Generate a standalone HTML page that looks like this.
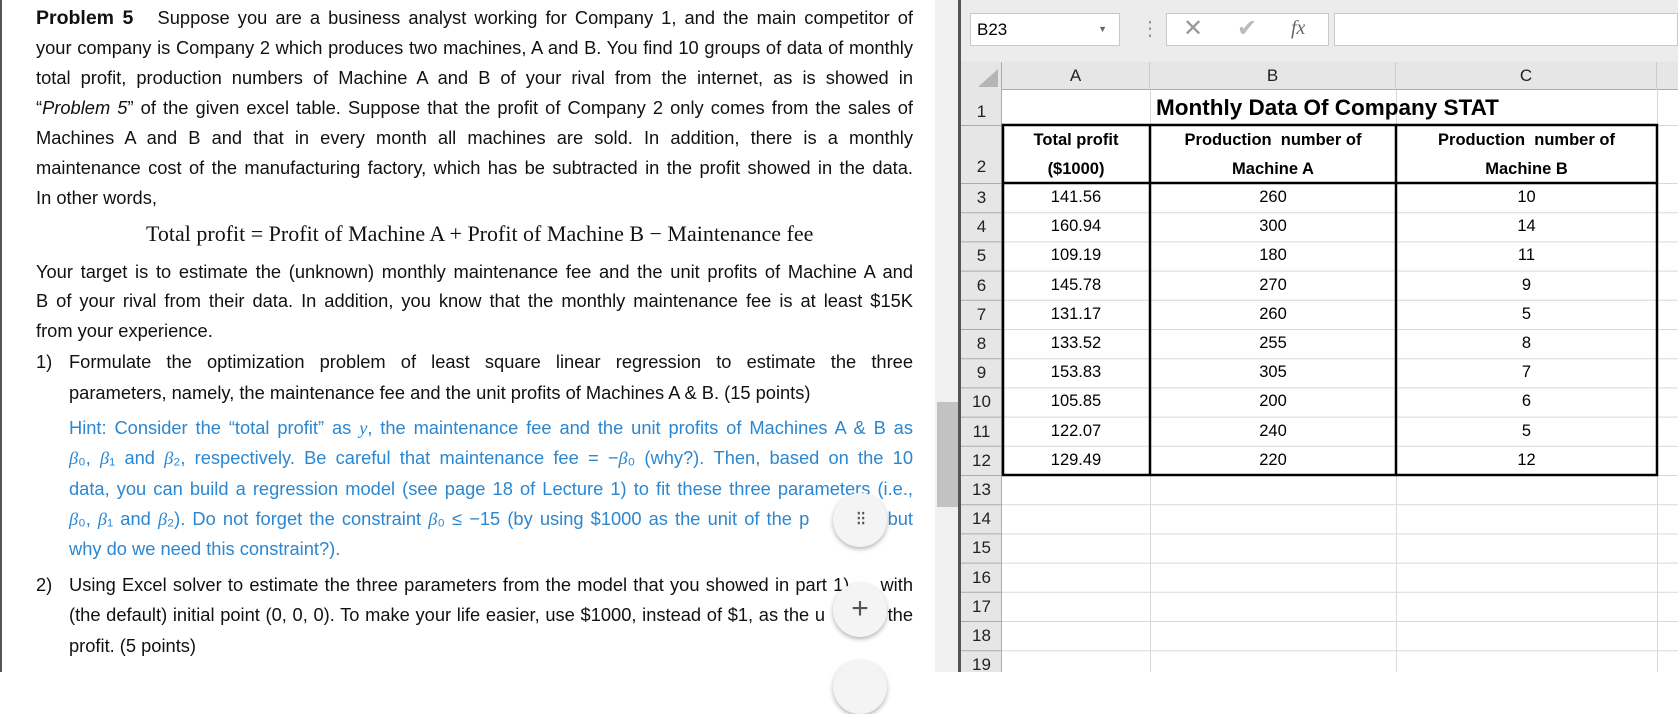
<!DOCTYPE html>
<html><head><meta charset="utf-8"><style>
*{margin:0;padding:0;box-sizing:border-box}
body{width:1678px;height:672px;overflow:hidden;background:#fff;position:relative;font-family:"Liberation Sans",sans-serif}
.a{position:absolute}
.doc{left:0;top:0;width:935px;height:672px;background:#fff;border-left:2px solid #555}
.ln{position:absolute;left:36px;width:877px;font-size:18.3px;line-height:30px;white-space:nowrap;color:#111;text-align:justify;text-align-last:justify}
.ln.nj{text-align-last:left}
.ind{left:69px;width:844px}
.blue{color:#2b87d1}
.m{font-family:"Liberation Serif",serif;font-style:italic}
.fab{position:absolute;width:54px;height:54px;border-radius:50%;background:#f4f4f4;box-shadow:0 2px 5px rgba(0,0,0,.3);color:#555;text-align:center;font-size:30px;line-height:52px}
.hdr{position:absolute;background:#e6e6e6;color:#222;font-size:17px;text-align:center}
.cell{position:absolute;text-align:center;font-size:16.5px;line-height:29px}
</style></head><body>
<div class="a doc"></div>
<div class="ln" style="top:3px"><b style="font-size:19.5px">Problem 5</b>&nbsp;&nbsp; Suppose you are a business analyst working for Company 1, and the main competitor of</div>
<div class="ln" style="top:33px">your company is Company 2 which produces two machines, A and B. You find 10 groups of data of monthly</div>
<div class="ln" style="top:63px">total profit, production numbers of Machine A and B of your rival from the internet, as is showed in</div>
<div class="ln" style="top:93px">“<i>Problem 5</i>” of the given excel table. Suppose that the profit of Company 2 only comes from the sales of</div>
<div class="ln" style="top:123px">Machines A and B and that in every month all machines are sold. In addition, there is a monthly</div>
<div class="ln" style="top:153px">maintenance cost of the manufacturing factory, which has be subtracted in the profit showed in the data.</div>
<div class="ln nj" style="top:183px">In other words,</div>
<div class="a" style="left:146px;top:219px;font-family:'Liberation Serif',serif;font-size:22px;line-height:30px;color:#111;white-space:nowrap">Total profit = Profit of Machine A + Profit of Machine B − Maintenance fee</div>
<div class="ln" style="top:257px">Your target is to estimate the (unknown) monthly maintenance fee and the unit profits of Machine A and</div>
<div class="ln" style="top:286px">B of your rival from their data. In addition, you know that the monthly maintenance fee is at least $15K</div>
<div class="ln nj" style="top:316px">from your experience.</div>
<div class="ln nj" style="top:347px;width:30px">1)</div>
<div class="ln ind" style="top:347px">Formulate the optimization problem of least square linear regression to estimate the three</div>
<div class="ln ind nj" style="top:378px">parameters, namely, the maintenance fee and the unit profits of Machines A &amp; B. (15 points)</div>
<div class="ln ind blue" style="top:413px">Hint: Consider the “total profit” as <span class="m">y</span>, the maintenance fee and the unit profits of Machines A &amp; B as</div>
<div class="ln ind blue" style="top:443px"><span class="m">β</span>₀, <span class="m">β</span>₁ and <span class="m">β</span>₂, respectively. Be careful that maintenance fee = −<span class="m">β</span>₀ (why?). Then, based on the 10</div>
<div class="ln ind blue" style="top:474px">data, you can build a regression model (see page 18 of Lecture 1) to fit these three parameters (i.e.,</div>
<div class="ln ind blue" style="top:504px"><span class="m">β</span>₀, <span class="m">β</span>₁ and <span class="m">β</span>₂). Do not forget the constraint <span class="m">β</span>₀ ≤ −15 (by using $1000 as the unit of the p&nbsp;&nbsp;&nbsp;&nbsp;&nbsp;&nbsp;&nbsp;&nbsp;&nbsp;&nbsp; but</div>
<div class="ln ind blue nj" style="top:534px">why do we need this constraint?).</div>
<div class="ln nj" style="top:570px;width:30px">2)</div>
<div class="ln ind" style="top:570px">Using Excel solver to estimate the three parameters from the model that you showed in part 1)&nbsp;&nbsp;&nbsp;&nbsp; with</div>
<div class="ln ind" style="top:600px">(the default) initial point (0, 0, 0). To make your life easier, use $1000, instead of $1, as the u&nbsp;&nbsp;&nbsp;&nbsp;&nbsp;&nbsp;&nbsp;&nbsp;&nbsp;&nbsp; the</div>
<div class="ln ind nj" style="top:631px">profit. (5 points)</div>
<div class="fab" style="left:833px;top:493px;font-size:20px;letter-spacing:-2px">⁝⁝</div>
<div class="fab" style="left:833px;top:583px">+</div>
<div class="fab" style="left:833px;top:660px"></div>

<div class="a" style="left:935px;top:0;width:743px;height:672px;background:#f0f0f0"></div>
<div class="a" style="left:937px;top:402px;width:21px;height:105px;background:#c2c2c2"></div>
<div class="a" style="left:958px;top:0;width:3px;height:672px;background:#555"></div>
<div class="a" style="left:961px;top:0;width:717px;height:62px;background:#ececec"></div>
<div class="a" style="left:970px;top:13px;width:150px;height:33px;background:#fff;border:1px solid #c8c8c8;font-size:17px;line-height:31px;padding-left:6px">B23<span style="position:absolute;right:12px;top:0;font-size:9px;color:#666">▼</span></div>
<div class="a" style="left:1140px;top:14px;color:#999;font-size:20px;line-height:30px">⋮</div>
<div class="a" style="left:1166px;top:13px;width:163px;height:33px;background:#fff;border:1px solid #c8c8c8"></div>
<div class="a" style="left:1183px;top:12px;color:#999;font-size:24px;line-height:33px">✕</div>
<div class="a" style="left:1237px;top:12px;color:#bbb;font-size:24px;line-height:33px">✔</div>
<div class="a" style="left:1291px;top:13px;color:#666;font-size:20px;line-height:31px;font-family:'Liberation Serif',serif;font-style:italic">fx</div>
<div class="a" style="left:1334px;top:13px;width:344px;height:33px;background:#fff;border:1px solid #c8c8c8"></div>
<div class="a" style="left:1002px;top:90px;width:676px;height:582px;background:#fff"></div>
<div class="hdr" style="left:961px;top:62px;width:717px;height:28px;border-bottom:1px solid #ababab"></div>
<div class="hdr" style="left:961px;top:62px;width:41px;height:610px;border-right:1px solid #ababab"></div>
<div class="a" style="left:978px;top:69px;width:0;height:0;border-left:20px solid transparent;border-bottom:18px solid #b5b5b5"></div>
<div class="hdr" style="left:1002px;top:62px;width:148px;height:28px;line-height:28px;border-right:1px solid #ccc;background:none">A</div>
<div class="hdr" style="left:1150px;top:62px;width:246px;height:28px;line-height:28px;border-right:1px solid #ccc;background:none">B</div>
<div class="hdr" style="left:1396px;top:62px;width:261px;height:28px;line-height:28px;border-right:1px solid #ccc;background:none">C</div>
<svg class="a" style="left:961px;top:90px" width="717" height="582">
<g stroke="#d9d9d9" stroke-width="1">
<line x1="41" y1="35.5" x2="717" y2="35.5"/><line x1="41" y1="93.5" x2="717" y2="93.5"/>
<line x1="189.5" y1="0" x2="189.5" y2="582"/><line x1="435.5" y1="0" x2="435.5" y2="582"/><line x1="696.5" y1="0" x2="696.5" y2="582"/>
<line x1="41" y1="122.7" x2="717" y2="122.7"/><line x1="41" y1="151.9" x2="717" y2="151.9"/><line x1="41" y1="181.1" x2="717" y2="181.1"/><line x1="41" y1="210.3" x2="717" y2="210.3"/><line x1="41" y1="239.5" x2="717" y2="239.5"/><line x1="41" y1="268.7" x2="717" y2="268.7"/><line x1="41" y1="297.9" x2="717" y2="297.9"/><line x1="41" y1="327.1" x2="717" y2="327.1"/><line x1="41" y1="356.3" x2="717" y2="356.3"/><line x1="41" y1="385.5" x2="717" y2="385.5"/><line x1="41" y1="414.7" x2="717" y2="414.7"/><line x1="41" y1="443.9" x2="717" y2="443.9"/><line x1="41" y1="473.1" x2="717" y2="473.1"/><line x1="41" y1="502.3" x2="717" y2="502.3"/><line x1="41" y1="531.5" x2="717" y2="531.5"/><line x1="41" y1="560.7" x2="717" y2="560.7"/>
</g>
<g stroke="#ababab"><line x1="0" y1="35.5" x2="41" y2="35.5"/><line x1="0" y1="93.5" x2="41" y2="93.5"/>
<line x1="0" y1="122.7" x2="41" y2="122.7"/><line x1="0" y1="151.9" x2="41" y2="151.9"/><line x1="0" y1="181.1" x2="41" y2="181.1"/><line x1="0" y1="210.3" x2="41" y2="210.3"/><line x1="0" y1="239.5" x2="41" y2="239.5"/><line x1="0" y1="268.7" x2="41" y2="268.7"/><line x1="0" y1="297.9" x2="41" y2="297.9"/><line x1="0" y1="327.1" x2="41" y2="327.1"/><line x1="0" y1="356.3" x2="41" y2="356.3"/><line x1="0" y1="385.5" x2="41" y2="385.5"/><line x1="0" y1="414.7" x2="41" y2="414.7"/><line x1="0" y1="443.9" x2="41" y2="443.9"/><line x1="0" y1="473.1" x2="41" y2="473.1"/><line x1="0" y1="502.3" x2="41" y2="502.3"/><line x1="0" y1="531.5" x2="41" y2="531.5"/><line x1="0" y1="560.7" x2="41" y2="560.7"/></g>
<g stroke="#000" stroke-width="2.5" fill="none">
<rect x="42" y="35" width="654" height="350"/>
<line x1="41" y1="93" x2="697" y2="93"/>
<line x1="189" y1="35" x2="189" y2="385"/><line x1="435" y1="35" x2="435" y2="385"/>
</g>
</svg>
<div class="a" style="left:961px;top:90px;width:41px;font-size:17px;color:#222;text-align:center">
<div style="height:35px;line-height:44px">1</div>
<div style="height:58px;line-height:84px">2</div>
<div style="line-height:29.2px">3<br>4<br>5<br>6<br>7<br>8<br>9<br>10<br>11<br>12<br>13<br>14<br>15<br>16<br>17<br>18<br>19</div>
</div>
<div class="a" style="left:1156px;top:90px;font-size:22.5px;font-weight:bold;line-height:35px;white-space:nowrap">Monthly Data Of Company STAT</div>
<div class="cell" style="left:1002px;top:126px;width:148px;font-weight:bold">Total profit<br>($1000)</div>
<div class="cell" style="left:1150px;top:126px;width:246px;font-weight:bold">Production&nbsp; number of<br>Machine A</div>
<div class="cell" style="left:1396px;top:126px;width:261px;font-weight:bold">Production&nbsp; number of<br>Machine B</div>
<div class="cell" style="left:1002px;top:183px;width:148px;line-height:29.2px">141.56<br>160.94<br>109.19<br>145.78<br>131.17<br>133.52<br>153.83<br>105.85<br>122.07<br>129.49</div>
<div class="cell" style="left:1150px;top:183px;width:246px;line-height:29.2px">260<br>300<br>180<br>270<br>260<br>255<br>305<br>200<br>240<br>220</div>
<div class="cell" style="left:1396px;top:183px;width:261px;line-height:29.2px">10<br>14<br>11<br>9<br>5<br>8<br>7<br>6<br>5<br>12</div>
</body></html>
